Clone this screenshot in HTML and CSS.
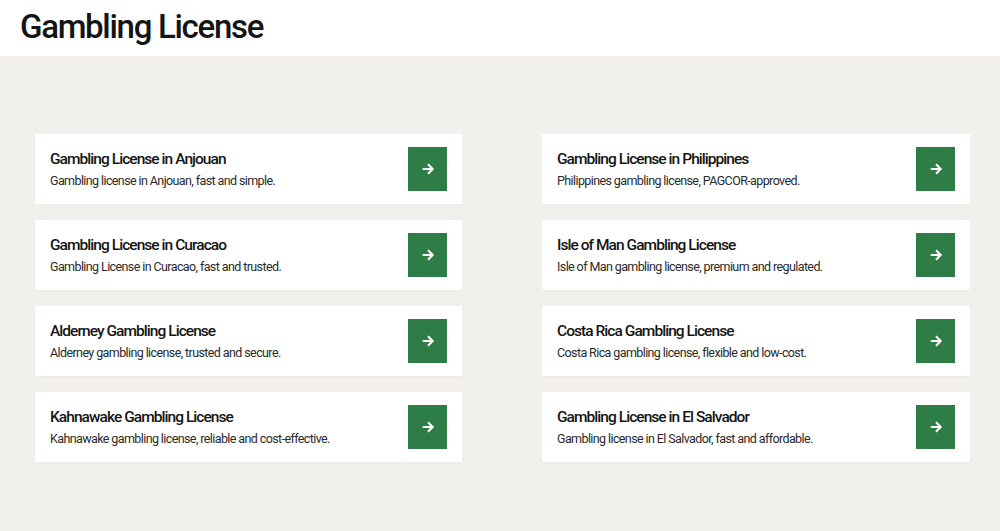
FILE: index.html
```html
<!DOCTYPE html>
<html lang="en">
<head>
  <meta charset="UTF-8">
  <meta name="viewport" content="width=device-width, initial-scale=1.0">
  <title>Gambling License</title>
  <link rel="stylesheet" href="styles.css">
</head>
<body>
  <header class="page-head">
    <h1>Gambling License</h1>
  </header>
  <main class="license-list">
    <a class="license-card" href="#">
      <div class="license-text">
        <h2>Gambling License in Anjouan</h2>
        <p>Gambling license in Anjouan, fast and simple.</p>
      </div>
      <span class="go-btn"><svg viewBox="0 0 12 12"><path d="M1.5 6h8.5M6 2l4 4-4 4"/></svg></span>
    </a>
    <a class="license-card" href="#">
      <div class="license-text">
        <h2>Gambling License in Philippines</h2>
        <p>Philippines gambling license, PAGCOR-approved.</p>
      </div>
      <span class="go-btn"><svg viewBox="0 0 12 12"><path d="M1.5 6h8.5M6 2l4 4-4 4"/></svg></span>
    </a>
    <a class="license-card" href="#">
      <div class="license-text">
        <h2>Gambling License in Curacao</h2>
        <p>Gambling License in Curacao, fast and trusted.</p>
      </div>
      <span class="go-btn"><svg viewBox="0 0 12 12"><path d="M1.5 6h8.5M6 2l4 4-4 4"/></svg></span>
    </a>
    <a class="license-card" href="#">
      <div class="license-text">
        <h2>Isle of Man Gambling License</h2>
        <p>Isle of Man gambling license, premium and regulated.</p>
      </div>
      <span class="go-btn"><svg viewBox="0 0 12 12"><path d="M1.5 6h8.5M6 2l4 4-4 4"/></svg></span>
    </a>
    <a class="license-card" href="#">
      <div class="license-text">
        <h2>Alderney Gambling License</h2>
        <p>Alderney gambling license, trusted and secure.</p>
      </div>
      <span class="go-btn"><svg viewBox="0 0 12 12"><path d="M1.5 6h8.5M6 2l4 4-4 4"/></svg></span>
    </a>
    <a class="license-card" href="#">
      <div class="license-text">
        <h2>Costa Rica Gambling License</h2>
        <p>Costa Rica gambling license, flexible and low-cost.</p>
      </div>
      <span class="go-btn"><svg viewBox="0 0 12 12"><path d="M1.5 6h8.5M6 2l4 4-4 4"/></svg></span>
    </a>
    <a class="license-card" href="#">
      <div class="license-text">
        <h2>Kahnawake Gambling License</h2>
        <p>Kahnawake gambling license, reliable and cost-effective.</p>
      </div>
      <span class="go-btn"><svg viewBox="0 0 12 12"><path d="M1.5 6h8.5M6 2l4 4-4 4"/></svg></span>
    </a>
    <a class="license-card" href="#">
      <div class="license-text">
        <h2>Gambling License in El Salvador</h2>
        <p>Gambling license in El Salvador, fast and affordable.</p>
      </div>
      <span class="go-btn"><svg viewBox="0 0 12 12"><path d="M1.5 6h8.5M6 2l4 4-4 4"/></svg></span>
    </a>
  </main>
</body>
</html>
```

FILE: styles.css
```css
body, html {
  padding: 0;
  margin: 0;
}
body {
  background-color: #f2f0ed;
  font-family: Roboto, "Liberation Sans", sans-serif;
  color: #1b1b1b;
  height: 531px;
  overflow: hidden;
}
.page-head {
  background-color: #fff;
  height: 56px;
  padding-left: 20px;
  display: flex;
  align-items: center;
}
.page-head h1 {
  margin: 0;
  font-size: 33px;
  font-weight: 500;
  letter-spacing: -1.3px;
  color: #141414;
  padding-bottom: 4px;
}
.license-list {
  display: grid;
  grid-template-columns: 427px 428px;
  column-gap: 80px;
  row-gap: 16px;
  padding: 78px 30px 0 35px;
}
.license-card {
  background-color: #fff;
  height: 70px;
  box-sizing: border-box;
  padding: 0 15px;
  display: flex;
  align-items: center;
  justify-content: space-between;
  text-decoration: none;
  color: inherit;
  box-shadow: 0 1px 2px rgba(0, 0, 0, 0.03);
}
.license-text h2 {
  margin: 0 0 5px;
  font-size: 15.5px;
  font-weight: 500;
  letter-spacing: -0.95px;
  color: #151515;
}
.license-text p {
  margin: 0;
  font-size: 12.5px;
  letter-spacing: -0.6px;
  color: #2a2a2a;
}
.go-btn {
  width: 39px;
  height: 44px;
  background-color: #2e7d46;
  display: flex;
  align-items: center;
  justify-content: center;
}
.go-btn svg {
  width: 14px;
  height: 14px;
  fill: none;
  stroke: #fff;
  stroke-width: 1.8;
}
```
